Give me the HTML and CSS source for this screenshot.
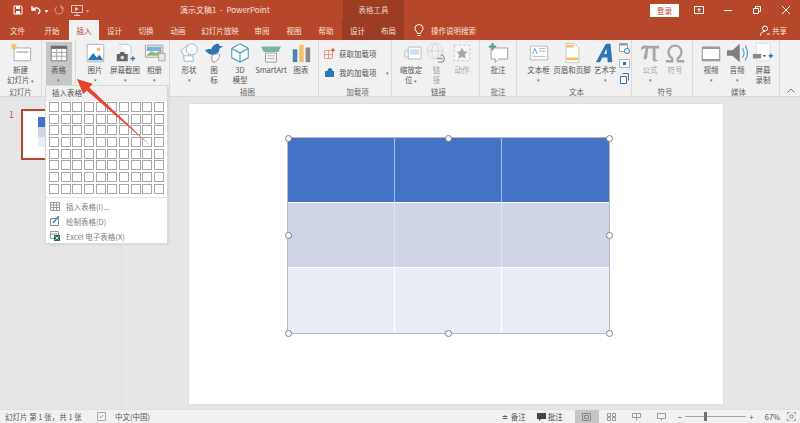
FILE: index.html
```html
<!DOCTYPE html>
<html lang="zh">
    <head>
        <meta charset="utf-8">
        <title>PowerPoint</title>
        <link rel="stylesheet" href="styles.css">
    </head>
    <body>
        <div class="titlebar">
            <div class="quick">
                <svg width="12" height="12" viewBox="0 0 12 12"><path d="M2 2h7l1 1v7H2z" fill="none" stroke="#fff"/><path d="M4 2h4v3H4zM4 7h4v3H4z" fill="#fff"/></svg>
                <svg width="14" height="12" viewBox="0 0 14 12"><path d="M3 2v4h4M3 6c2-3 7-3 8 1 0 1-1 2-2 3" fill="none" stroke="#fff" stroke-width="1.4"/></svg>
                <span class="tiny">▾</span>
                <svg class="dim" width="12" height="12" viewBox="0 0 12 12"><path d="M8 2.500a4 4 0 1 1-4 0M8 1v3h3" fill="none" stroke="#fff"/></svg>
                <svg class="dim2" width="14" height="12" viewBox="0 0 14 12"><path d="M1.500 1.500h11v7h-11zM7 8.500v3M4 11.500h6" fill="none" stroke="#fff"/><path d="M5 3l4 2-4 2z" fill="#fff"/></svg>
                <span class="tiny dim">▾</span>
            </div>
            <div class="doc-title">演示文稿1&nbsp; -&nbsp; PowerPoint</div>
            <div class="ctx-head">表格工具</div>
            <div class="login">登录</div>
            <div class="winbtns">
                <svg width="10" height="10" viewBox="0 0 10 10"><path d="M.5 1.500h9v7h-9z" fill="none" stroke="#fff"/><path d="M5 7V3.500M3.500 5L5 3.500 6.500 5" fill="none" stroke="#fff"/></svg>
                <svg width="10" height="10" viewBox="0 0 10 10"><path d="M1 5.500h8" stroke="#fff"/></svg>
                <svg width="10" height="10" viewBox="0 0 10 10"><path d="M1.500 3.500h5v5h-5zM3.500 3.500v-2h5v5h-2" fill="none" stroke="#fff"/></svg>
                <svg width="10" height="10" viewBox="0 0 10 10"><path d="M1 1l8 8M9 1l-8 8" stroke="#fff"/></svg>
            </div>
        </div>

        <div class="tabbar">
            <div class="tab w35">文件</div>
            <div class="tab w34">开始</div>
            <div class="tab w30 active">插入</div>
            <div class="tab w31">设计</div>
            <div class="tab w32">切换</div>
            <div class="tab w32">动画</div>
            <div class="tab w52">幻灯片放映</div>
            <div class="tab w32">审阅</div>
            <div class="tab w32">视图</div>
            <div class="tab w32">帮助</div>
            <div class="ctx-tabs">
                <div class="tab w31">设计</div>
                <div class="tab w31">布局</div>
            </div>
            <div class="search">
                <svg width="10" height="13" viewBox="0 0 10 13"><path d="M3.500 9.500C3 7.500 1 6.500 1 4.500a4 4 0 0 1 8 0c0 2-2 3-2.500 5zM3.500 11.500h3" fill="none" stroke="#fff"/></svg>
                <span>操作说明搜索</span>
            </div>
            <div class="share">
                <svg width="10" height="11" viewBox="0 0 10 11"><circle cx="5" cy="3.500" r="2.500" fill="none" stroke="#fff"/><path d="M.5 10.500c0-3 2-4 4.500-4" fill="none" stroke="#fff"/><path d="M7 9h3" stroke="#fff"/></svg>
                <span>共享</span>
            </div>
        </div>

        <div class="ribbon">
            <div class="group g42">
                <div class="btns">
                    <div class="btn w42">
                        <svg class="ico" viewBox="0 0 24 24"><path d="M4.500 6.500h18v14h-18z" fill="#fff" stroke="#a6a6a6"/><path d="M7 10h13v2H7z" fill="#c4c4c4"/><path d="M4 1l1 2 2-1-1 2 2 1-2 1 1 2-2-1-1 2-1-2-2 1 1-2-2-1 2-1-1-2 2 1z" fill="#f0c36a"/></svg>
                        <span>新建<br>幻灯片 <i>▾</i></span>
                    </div>
                </div>
                <div class="glabel">幻灯片</div>
            </div>
            <div class="group g34">
                <div class="btns centered">
                    <div class="btn w26 pressed">
                        <svg class="ico" viewBox="0 0 24 24"><path d="M3.500 4.500h17v16h-17z" fill="#fff" stroke="#777"/><path d="M3.500 4.500h17v3h-17z" fill="#666"/><path d="M3.500 11.500h17M3.500 15.500h17M9.500 7v13M15 7v13" stroke="#a0a0a0" fill="none"/></svg>
                        <span>表格</span>
                        <i>▾</i>
                    </div>
                </div>
                <div class="glabel"></div>
            </div>
            <div class="group g94 pad5">
                <div class="btns">
                    <div class="btn w28">
                        <svg class="ico" viewBox="0 0 24 24"><path d="M3.500 2.500h18v19h-18z" fill="#fff" stroke="#b0b0b0"/><path d="M4 20l6-8 4 5 3-3 4 6z" fill="#2e75b6"/><circle cx="16" cy="8" r="2" fill="#f0b37e"/></svg>
                        <span>图片</span><i>▾</i>
                    </div>
                    <div class="btn w32">
                        <svg class="ico" viewBox="0 0 24 24"><path d="M5.500 2.500h10l3 3v8" fill="#fff" stroke="#c0c0c0"/><path d="M3 13h3l1-2h4l1 2h3v8H3z" fill="#666"/><circle cx="9" cy="17" r="2" fill="#ddd"/><path d="M18 18h5M20.500 15.500v5" stroke="#2e75b6" stroke-width="1.500"/></svg>
                        <span>屏幕截图</span><i>▾</i>
                    </div>
                    <div class="btn w27">
                        <svg class="ico" viewBox="0 0 24 24"><path d="M1.500 3.500h19v13h-19z" fill="#fff" stroke="#999"/><path d="M3 5h16v5H3z" fill="#7fb0dc"/><path d="M3 14l5-4 5 2 6-3v6H3z" fill="#8cbb6c"/><path d="M16 12.500h7v8h-7z" fill="#e8e8e8" stroke="#a6a6a6"/></svg>
                        <span>相册</span><i>▾</i>
                    </div>
                </div>
                <div class="glabel"></div>
            </div>
            <div class="group g149 pad7">
                <div class="btns">
                    <div class="btn w24">
                        <svg class="ico" viewBox="0 0 24 24"><path d="M3 9l8-6 4 7-7 8z" fill="#f7f7f7" stroke="#9fb2c6"/><circle cx="15" cy="8" r="6" fill="#fff" fill-opacity=".7" stroke="#9fb2c6"/><path d="M6 15h10l1 6H7z" fill="#fff" stroke="#9fb2c6"/></svg>
                        <span>形状</span><i>▾</i>
                    </div>
                    <div class="btn w26">
                        <svg class="ico" viewBox="0 0 24 24"><path d="M2 9c3-1 5-2 7-1 1-4 5-7 8-6l1 2 4 1-4 2c0 4-3 7-9 7C6 13 4 11 2 9z" fill="#2e75b6"/><path d="M11 14c4-2 7 0 7 0 0 4-3 8-7 8-2-3-2-6 0-8z" fill="#fff" stroke="#888"/></svg>
                        <span>图<br>标</span>
                    </div>
                    <div class="btn w26">
                        <svg class="ico" viewBox="0 0 24 24"><path d="M12 2l9 5v10l-9 5-9-5V7zM3 7l9 5 9-5M12 12v10" fill="#fff" stroke="#4f9cc0" stroke-width="1.200"/></svg>
                        <span>3D<br>模型</span>
                    </div>
                    <div class="btn w36">
                        <svg class="ico" viewBox="0 0 24 24"><path d="M1 5h22l-3 6H4z" fill="#7db59c"/><path d="M6 12h12v10H6z" fill="#f4f4f4" stroke="#999"/><path d="M8 15h8M8 18h8" stroke="#b5b5b5"/></svg>
                        <span>SmartArt</span>
                    </div>
                    <div class="btn w24">
                        <svg class="ico" viewBox="0 0 24 24"><path d="M3 8h5v14H3z" fill="#4e7fb0"/><path d="M10 3h5v19h-5z" fill="#f0c36a"/><path d="M17 6h5v16h-5z" fill="#8a8a8a"/></svg>
                        <span>图表</span>
                    </div>
                </div>
                <div class="glabel">插图</div>
            </div>
            <div class="group g73 pad5">
                <div class="btns stack">
                    <div class="sbtn">
                        <svg width="11" height="11" viewBox="0 0 11 11"><path d="M.5 2.500h8v8h-8zM.5 6.500h8M4.500 2.500v8" fill="none" stroke="#e6a18c"/><path d="M9 0v4M7 2h4" stroke="#d24726"/></svg>
                        <span>获取加载项</span>
                    </div>
                    <div class="sbtn">
                        <svg width="11" height="11" viewBox="0 0 11 11"><path d="M1 4h2.500c0-4 5-4 5 0H10v6H1z" fill="#2e75b6"/></svg>
                        <span>我的加载项</span>
                        <i>▾</i>
                    </div>
                </div>
                <div class="glabel">加载项</div>
            </div>
            <div class="group g88 pad6">
                <div class="btns">
                    <div class="btn w26">
                        <svg class="ico" viewBox="0 0 24 24"><path d="M5 9.500h8v7H5z" fill="#eef3f8" stroke="#c4c4c4"/><path d="M9 5.500h14v13H9z" fill="#fff" stroke="#b5b5b5"/><path d="M11 8h10v6H11z" fill="#cfe0f0"/></svg>
                        <span>缩放定<br>位 <i>▾</i></span>
                    </div>
                    <div class="btn w25 off">
                        <svg class="ico" viewBox="0 0 24 24"><circle cx="10" cy="10" r="8.500" fill="none" stroke="#d4d4d4"/><path d="M1.500 10h17M10 1.500c-5 5-5 12 0 17M10 1.500c5 5 5 12 0 17" fill="none" stroke="#d4d4d4"/><path d="M12 18h6M16 14a4 4 0 0 1 0 8h-3" fill="none" stroke="#999" stroke-width="1.500"/></svg>
                        <span>链<br>接</span>
                    </div>
                    <div class="btn w26 off">
                        <svg class="ico" viewBox="0 0 24 24"><path d="M3.500 3.500h17v17h-17z" fill="#f6f6f6" stroke="#c4c4c4" stroke-dasharray="3 2"/><path d="M12 6l2 4 4 .5-3 3 1 4.500-4-2-4 2 1-4.500-3-3 4-.5z" fill="#a6a6a6"/></svg>
                        <span>动作</span>
                    </div>
                </div>
                <div class="glabel">链接</div>
            </div>
            <div class="group g37">
                <div class="btns centered">
                    <div class="btn w34">
                        <svg class="ico" viewBox="0 0 24 24"><path d="M4.500 6.500h18v12H13l-4 4v-4H4.500z" fill="#fff" stroke="#999"/><path d="M2 5h8M6 1v8" stroke="#5ba58c" stroke-width="2.500"/></svg>
                        <span>批注</span>
                    </div>
                </div>
                <div class="glabel">批注</div>
            </div>
            <div class="group g115 pad5">
                <div class="btns">
                    <div class="btn w27 nudge">
                        <svg class="ico" viewBox="0 0 24 24"><path d="M2.500 4.500h19v15h-19z" fill="#fff" stroke="#b0b0b0"/><path d="M5 13l2.500-6L10 13" fill="none" stroke="#5b9bd5"/><path d="M12 7h7M12 10h7M5 16h14" fill="none" stroke="#b5b5b5"/></svg>
                        <span>文本框</span><i>▾</i>
                    </div>
                    <div class="btn w40">
                        <svg class="ico" viewBox="0 0 24 24"><path d="M5.500 1.500h9l5 5v16h-14z" fill="#fff" stroke="#c4c4c4"/><path d="M6 3h8v3H6zM6 17h13v3H6z" fill="#f0c36a"/></svg>
                        <span>页眉和页脚</span>
                    </div>
                    <div class="btn w26">
                        <svg class="ico" viewBox="0 0 24 24"><path d="M2 22L13 2h5l2 20h-5l-.5-5H9l-2.500 5zM11 13h3l-.5-6z" fill="#2e75b6" fill-rule="evenodd"/></svg>
                        <span>艺术字</span><i>▾</i>
                    </div>
                    <div class="mini-col">
                        <svg width="11" height="11" viewBox="0 0 11 11"><path d="M.5.500h8v8h-8z" fill="#fff" stroke="#a6a6a6"/><path d="M.5.500h8v2h-8z" fill="#999"/><circle cx="8" cy="8" r="2.500" fill="#fff" stroke="#2e75b6"/></svg>
                        <svg width="11" height="11" viewBox="0 0 11 11"><path d="M.5 1.500h10v8H.5z" fill="#fff" stroke="#b5b5b5"/><path d="M4 7h3V4H4z" fill="#2e75b6"/></svg>
                        <svg width="11" height="11" viewBox="0 0 11 11"><path d="M1.500 3.500h6v7h-6z" fill="#fff" stroke="#2e75b6"/><path d="M3.500.500h6v7" fill="none" stroke="#666"/></svg>
                    </div>
                </div>
                <div class="glabel">文本</div>
            </div>
            <div class="group g61 pad6">
                <div class="btns">
                    <div class="btn w24 off">
                        <svg class="ico" viewBox="0 0 24 24"><path d="M2 6c3-3 4-2 8-2h12v3h-4v11c0 2 1 2 3 1-1 3-6 3-6 0V7h-5l-1 9c0 3-3 4-4 2 0-4 2-6 2-11-2 0-3 0-4 2z" fill="#a6a6a6"/></svg>
                        <span>公式</span><i>▾</i>
                    </div>
                    <div class="btn w26 off">
                        <svg class="ico" viewBox="0 0 24 24"><path d="M2 21h7v-3c-3-2-4-4-4-7 0-4 3-7 7-7s7 3 7 7c0 3-1 5-4 7v3h7" fill="none" stroke="#a6a6a6" stroke-width="2.500"/></svg>
                        <span>符号</span>
                    </div>
                </div>
                <div class="glabel">符号</div>
            </div>
            <div class="group g87 pad5">
                <div class="btns">
                    <div class="btn w26">
                        <svg class="ico" viewBox="0 0 24 24"><path d="M2.500 5.500h19v15h-19z" fill="#fff" stroke="#888"/><path d="M2.500 5.500h19v2h-19zM2.500 18.500h19v2h-19z" fill="#999"/></svg>
                        <span>视频</span><i>▾</i>
                    </div>
                    <div class="btn w26">
                        <svg class="ico" viewBox="0 0 24 24"><path d="M1 9h6l8-7v20l-8-7H1z" fill="#7f7f7f"/><path d="M18 7c2 3 2 7 0 10M21 4c3 5 3 11 0 16" fill="none" stroke="#5b9bd5" stroke-width="1.300"/></svg>
                        <span>音频</span><i>▾</i>
                    </div>
                    <div class="btn w26">
                        <svg class="ico" viewBox="0 0 24 24"><path d="M4.500 1.500h15v19h-15z" fill="#fff" stroke="#ddd"/><path d="M1 13h9v5H1z" fill="#888"/><path d="M12 15h3M18 15h5M20.500 12.500v5" stroke="#2e75b6" stroke-width="1.500"/></svg>
                        <span>屏幕<br>录制</span>
                    </div>
                </div>
                <div class="glabel">媒体</div>
            </div>
            <div class="collapse">
                <svg width="8" height="5" viewBox="0 0 8 5"><path d="M.5 4.500L4 1l3.500 3.500" fill="none" stroke="#777"/></svg>
            </div>
        </div>

        <div class="workspace">
            <div class="thumbs">
                <div class="thumb-num">1</div>
                <div class="thumb">
                    <div class="thumb-table">
                        <div class="tt1"></div>
                        <div class="tt2"></div>
                        <div class="tt3"></div>
                    </div>
                </div>
            </div>
            <div class="stage">
                <div class="slide">
                    <div class="slide-table">
                        <div class="cell head"></div><div class="cell head"></div><div class="cell head"></div>
                        <div class="cell mid"></div><div class="cell mid"></div><div class="cell mid"></div>
                        <div class="cell low"></div><div class="cell low"></div><div class="cell low"></div>
                        <span class="handle h-tl"></span><span class="handle h-tc"></span><span class="handle h-tr"></span>
                        <span class="handle h-ml"></span><span class="handle h-mr"></span>
                        <span class="handle h-bl"></span><span class="handle h-bc"></span><span class="handle h-br"></span>
                    </div>
                </div>
            </div>
        </div>

        <div class="statusbar">
            <span class="st-pages">幻灯片 第 1 张，共 1 张</span>
            <svg class="st-check" width="9" height="9" viewBox="0 0 9 9"><path d="M.5.500h8v8h-8z" fill="none" stroke="#aaa"/><path d="M3 4l1 2 2-3" fill="none" stroke="#aaa"/></svg>
            <span>中文(中国)</span>
            <div class="st-right">
                <span class="st-note"><span class="gl">≐</span>备注</span>
                <span class="st-comment">
                    <svg width="9" height="8" viewBox="0 0 9 8"><path d="M0 0h9v6H4L2 8V6H0z" fill="#444"/></svg>批注
                </span>
                <div class="view on"><svg width="9" height="8" viewBox="0 0 9 8"><path d="M.5.500h8v7h-8zM2.500 2.500h4v3h-4z" fill="none" stroke="#888"/></svg></div>
                <div class="view"><svg width="9" height="8" viewBox="0 0 9 8"><path d="M.5.500h3v3h-3zM5.500.500h3v3h-3zM.5 4.500h3v3h-3zM5.500 4.500h3v3h-3z" fill="none" stroke="#999"/></svg></div>
                <div class="view"><svg width="9" height="8" viewBox="0 0 9 8"><path d="M.5.500h8v4h-8zM4.500.500v7" fill="none" stroke="#999"/></svg></div>
                <div class="view"><svg width="9" height="8" viewBox="0 0 9 8"><path d="M.5.500h8v5h-8zM4.500 5.500v2" fill="none" stroke="#999"/></svg></div>
                <span class="zm">−</span>
                <div class="slider"><div class="knob"></div></div>
                <span class="zm">+</span>
                <span class="pct">67%</span>
                <svg class="st-fit" width="9" height="9" viewBox="0 0 9 9"><path d="M.5 2.500v-2h2M6.500.500h2v2M8.500 6.500v2h-2M2.500 8.500h-2v-2M3 3h3v3H3z" fill="none" stroke="#999"/></svg>
            </div>
        </div>

        <div class="table-menu">
            <div class="menu-head">插入表格</div>
            <div class="menu-grid" id="menu-grid"></div>
            <div class="menu-item">
                <svg width="10" height="9" viewBox="0 0 10 9"><path d="M.5.500h9v8h-9zM.5 3h9M.5 5.500h9M3.500.5v8M6.500.5v8" fill="none" stroke="#999"/></svg>
                <span>插入表格(I)...</span>
            </div>
            <div class="menu-item">
                <svg width="10" height="10" viewBox="0 0 10 10"><path d="M.5 2.500h8v7h-8z" fill="none" stroke="#888"/><path d="M3 7l6-7" stroke="#2e75b6" stroke-width="1.300"/></svg>
                <span>绘制表格(D)</span>
            </div>
            <div class="menu-item">
                <svg width="10" height="10" viewBox="0 0 10 10"><path d="M.5.500h8v7h-8zM.5 3h8" fill="none" stroke="#999"/><path d="M4 4h6v6H4z" fill="#217346"/><path d="M5.500 5.500l3 3M8.500 5.500l-3 3" stroke="#fff" stroke-width=".8"/></svg>
                <span>Excel 电子表格(X)</span>
            </div>
        </div>

        <svg class="red-arrow" width="800" height="423" viewBox="0 0 800 423">
            <path d="M77 79L92.700 83.800 89.300 87.500 152 147 86.700 90.500 83.300 94.200z" fill="#e8432e"/>
        </svg>

        <script>
            var grid = document.getElementById('menu-grid');
            for (var i = 0; i < 80; i++) {
                var c = document.createElement('div');
                c.className = 'menu-cell';
                grid.appendChild(c);
            }
        </script>
    </body>
</html>
```

FILE: styles.css
```css
* {
    box-sizing: border-box;
}
html, body {
    margin: 0;
    padding: 0;
}
body {
    position: relative;
    width: 800px;
    height: 423px;
    overflow: hidden;
    display: flex;
    flex-direction: column;
    background-color: #e6e6e6;
    font-family: "Noto Sans CJK SC", "Noto Sans", sans-serif;
    font-size: 7.5px;
    color: #555555;
}

/* title bar */
.titlebar {
    display: flex;
    align-items: center;
    height: 20px;
    background-color: #b7472a;
    color: #ffffff;
}
.quick {
    display: flex;
    align-items: center;
    gap: 5px;
    width: 180px;
    padding-left: 12px;
}
.quick .tiny {
    font-size: 6px;
    margin-left: -3px;
}
.quick .dim {
    opacity: 0.45;
}
.quick .dim2 {
    opacity: 0.7;
}
.doc-title {
    width: 163px;
    font-size: 8px;
    line-height: 20px;
    color: #f7e4de;
}
.ctx-head {
    width: 61px;
    height: 20px;
    line-height: 20px;
    text-align: center;
    background-color: #9c3d23;
    color: #e9cfc7;
}
.login {
    width: 29px;
    height: 13px;
    margin-left: 246px;
    line-height: 13px;
    text-align: center;
    background-color: #ffffff;
    color: #b7472a;
}
.winbtns {
    display: flex;
    align-items: center;
    gap: 19px;
    margin-left: 15px;
}

/* tabs */
.tabbar {
    display: flex;
    align-items: stretch;
    height: 20px;
    background-color: #b7472a;
    color: #f6e3dd;
}
.tab {
    padding-top: 1px;
    line-height: 19px;
    text-align: center;
    white-space: nowrap;
}
.tab.active {
    background-color: #f1f1f1;
    color: #b7472a;
}
.w24 { width: 24px; }
.w25 { width: 25px; }
.w26 { width: 26px; }
.w27 { width: 27px; }
.w28 { width: 28px; }
.w30 { width: 30px; }
.w31 { width: 31px; }
.w32 { width: 32px; }
.w34 { width: 34px; }
.w35 { width: 35px; }
.w36 { width: 36px; }
.w40 { width: 40px; }
.w42 { width: 42px; }
.w52 { width: 52px; }
.ctx-tabs {
    display: flex;
    width: 62px;
    background-color: #9c3d23;
}
.search {
    display: flex;
    align-items: center;
    gap: 7px;
    width: 346px;
    margin-left: 10px;
}
.share {
    display: flex;
    align-items: center;
    gap: 2px;
    flex-shrink: 0;
    white-space: nowrap;
}

/* ribbon */
.ribbon {
    position: relative;
    display: flex;
    height: 57px;
    background-color: #f1f1f1;
    border-bottom: 1px solid #d9d9d9;
}
.group {
    display: flex;
    flex-direction: column;
    border-right: 1px solid #dcdcdc;
}
.g34 { width: 34px; }
.g37 { width: 37px; }
.g42 { width: 42px; }
.g61 { width: 61px; }
.g73 { width: 73px; }
.g87 { width: 87px; }
.g88 { width: 88px; }
.g94 { width: 94px; }
.g115 { width: 115px; }
.g149 { width: 149px; }
.pad5 { padding-left: 5px; }
.pad6 { padding-left: 6px; }
.pad7 { padding-left: 7px; }
.btns {
    display: flex;
    flex: 1;
    min-height: 0;
    padding-top: 2px;
}
.btns.centered {
    justify-content: center;
}
.btns.stack {
    flex-direction: column;
    gap: 8px;
    padding-top: 8px;
}
.glabel {
    height: 9px;
    line-height: 9px;
    text-align: center;
    color: #666666;
}
.btn {
    display: flex;
    flex-direction: column;
    align-items: center;
    line-height: 10px;
    text-align: center;
    white-space: nowrap;
}
.btn i, .sbtn i {
    font-style: normal;
    font-size: 5px;
    line-height: 9px;
    color: #777777;
}
.btn span i {
    line-height: 10px;
}
.btn.pressed {
    height: 44px;
    background-color: #c6c6c6;
}
.btn.off {
    color: #a6a6a6;
}
.btn.nudge {
    margin-left: 3px;
}
.ico {
    width: 22px;
    height: 22px;
    margin-bottom: 1px;
    flex-shrink: 0;
}
.sbtn {
    display: flex;
    align-items: center;
    gap: 4px;
    line-height: 11px;
}
.sbtn i {
    margin-left: 5px;
}
.mini-col {
    display: flex;
    flex-direction: column;
    gap: 4px;
    margin-left: 1px;
    padding-top: 1px;
}
.collapse {
    margin-left: auto;
    padding: 47px 5px 0 0;
    line-height: 5px;
}

/* work area */
.workspace {
    display: flex;
    flex: 1;
    min-height: 0;
}
.thumbs {
    display: flex;
    gap: 7px;
    width: 122px;
    padding: 12px 0 0 9px;
    border-right: 1px solid #dedede;
}
.thumb-num {
    font-size: 9px;
    line-height: 11px;
    color: #c55a3c;
}
.thumb {
    width: 90px;
    height: 51px;
    background-color: #ffffff;
    border: 2px solid #b7472a;
    padding: 6px 0 0 15px;
}
.thumb-table {
    width: 54px;
}
.tt1, .tt2, .tt3 {
    height: 10px;
}
.tt1 { background-color: #4472c4; }
.tt2 { background-color: #cfd5e7; }
.tt3 { background-color: #e9ebf5; }
.stage {
    flex: 1;
    padding: 7px 0 0 67px;
}
.slide {
    width: 534px;
    height: 300px;
    padding: 34px 0 0 99px;
    background-color: #ffffff;
    box-shadow: 0 0 2px #cccccc;
}
.slide-table {
    position: relative;
    display: grid;
    grid-template-columns: repeat(3, 107px);
    grid-template-rows: repeat(3, 65px);
    width: 321px;
    height: 195px;
    outline: 1px solid #b5b9c8;
}
.cell {
    border-right: 1px solid #ffffff;
    border-bottom: 1px solid #ffffff;
}
.cell:nth-child(3n) {
    border-right: 0;
}
.cell.head { background-color: #4472c4; border-right-color: #a9bfe6; }
.cell.mid { background-color: #cfd5e7; border-right-color: #e1e5f0; }
.cell.low { background-color: #e9ebf5; border-bottom: 0; }
.handle {
    position: absolute;
    width: 7px;
    height: 7px;
    margin: -3.500px 0 0 -3.500px;
    border: 1px solid #808080;
    border-radius: 50%;
    background-color: #ffffff;
}
.h-tl { left: 0; top: 0; }
.h-tc { left: 50%; top: 0; }
.h-tr { left: 100%; top: 0; }
.h-ml { left: 0; top: 50%; }
.h-mr { left: 100%; top: 50%; }
.h-bl { left: 0; top: 100%; }
.h-bc { left: 50%; top: 100%; }
.h-br { left: 100%; top: 100%; }

/* status bar */
.statusbar {
    display: flex;
    align-items: center;
    height: 14px;
    padding-left: 5px;
    background-color: #f1f1f1;
    border-top: 1px solid #e0e0e0;
    line-height: 13px;
    white-space: nowrap;
}
.st-pages {
    width: 92px;
}
.st-check {
    margin-right: 9px;
}
.st-right {
    display: flex;
    align-items: center;
    margin-left: auto;
    height: 13px;
}
.st-note .gl {
    font-size: 7px;
    margin-right: 3px;
}
.st-comment {
    display: flex;
    align-items: center;
    gap: 2px;
    margin: 0 12px 0 11px;
    color: #444444;
}
.view {
    display: flex;
    align-items: center;
    justify-content: center;
    width: 24px;
    height: 13px;
    margin-right: 1px;
}
.view.on {
    background-color: #c6c6c6;
}
.zm {
    font-size: 8px;
    margin: 0 3px;
}
.slider {
    position: relative;
    width: 61px;
    height: 1px;
    background-color: #a6a6a6;
}
.knob {
    position: absolute;
    left: 19px;
    top: -4px;
    width: 3px;
    height: 9px;
    background-color: #707070;
}
.pct {
    margin-left: 8px;
}
.st-fit {
    margin: 0 4px 0 7px;
}

/* popup under the table button */
.table-menu {
    position: absolute;
    left: 45px;
    top: 85px;
    width: 123px;
    height: 159px;
    background-color: #ffffff;
    border: 1px solid #dadada;
    box-shadow: 1px 1px 2px #d6d6d6;
}
.menu-head {
    height: 15px;
    padding-left: 6px;
    line-height: 14px;
    background-color: #f0f0f0;
    color: #555555;
}
.menu-grid {
    display: grid;
    grid-template-columns: repeat(10, 10px);
    grid-auto-rows: 10px;
    gap: 1.670px;
    padding: 1px 0 3px 3px;
    margin-bottom: 1px;
    border-bottom: 1px solid #e6e6e6;
}
.menu-cell {
    background-color: #ffffff;
    border: 1px solid #a8a8a8;
}
.menu-item {
    display: flex;
    align-items: center;
    gap: 6px;
    height: 15px;
    padding-left: 4px;
    color: #808080;
}

.red-arrow {
    position: absolute;
    left: 0;
    top: 0;
    pointer-events: none;
}
```
